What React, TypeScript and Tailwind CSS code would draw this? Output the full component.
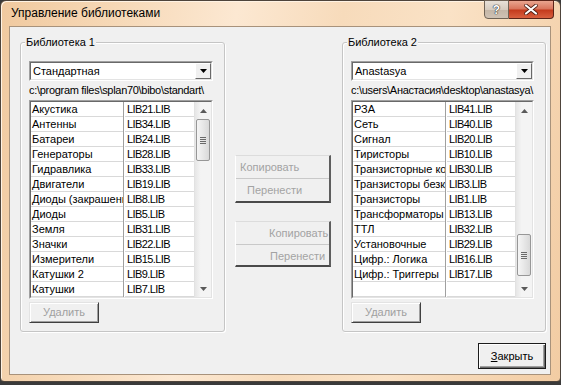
import React from "react"

const leftRows: [string, string][] = [
  ["Акустика", "LIB21.LIB"],
  ["Антенны", "LIB34.LIB"],
  ["Батареи", "LIB24.LIB"],
  ["Генераторы", "LIB28.LIB"],
  ["Гидравлика", "LIB33.LIB"],
  ["Двигатели", "LIB19.LIB"],
  ["Диоды (закрашенные)", "LIB8.LIB"],
  ["Диоды", "LIB5.LIB"],
  ["Земля", "LIB31.LIB"],
  ["Значки", "LIB22.LIB"],
  ["Измерители", "LIB15.LIB"],
  ["Катушки 2", "LIB9.LIB"],
  ["Катушки", "LIB7.LIB"],
]

const rightRows: [string, string][] = [
  ["РЗА", "LIB41.LIB"],
  ["Сеть", "LIB40.LIB"],
  ["Сигнал", "LIB20.LIB"],
  ["Тиристоры", "LIB10.LIB"],
  ["Транзисторные корпуса", "LIB30.LIB"],
  ["Транзисторы безкорпусные", "LIB3.LIB"],
  ["Транзисторы", "LIB1.LIB"],
  ["Трансформаторы", "LIB13.LIB"],
  ["ТТЛ", "LIB32.LIB"],
  ["Установочные", "LIB29.LIB"],
  ["Цифр.: Логика", "LIB16.LIB"],
  ["Цифр.: Триггеры", "LIB17.LIB"],
  ["", ""],
]

function Arrow({ up }: { up?: boolean }) {
  return (
    <div className="h-[17px] flex items-center justify-center">
      <svg width="7" height="4" viewBox="0 0 7 4">
        <path d={up ? "M0 4 L3.5 0 L7 4Z" : "M0 0 L7 0 L3.5 4Z"} fill="#5a5a5a" />
      </svg>
    </div>
  )
}

function Scrollbar({ thumbClass }: { thumbClass: string }) {
  return (
    <div className="w-[17px] flex flex-col border-l border-[#e2e2e2] bg-[linear-gradient(90deg,#e6e6e6,#f4f4f4_35%,#f4f4f4)]">
      <Arrow up />
      <div className="flex-1">
        <div
          className={
            "mx-[1px] h-[42px] rounded-[2px] border border-[#979797] bg-[linear-gradient(90deg,#f5f5f5,#e9e9e9_45%,#d9d9d9)] flex flex-col items-center justify-center gap-[1px] " +
            thumbClass
          }
        >
          <div className="w-[6px] h-px bg-[#6a6a6a]" />
          <div className="w-[6px] h-px bg-[#6a6a6a]" />
          <div className="w-[6px] h-px bg-[#6a6a6a]" />
          <div className="w-[6px] h-px bg-[#6a6a6a]" />
        </div>
      </div>
      <Arrow />
    </div>
  )
}

function Combo({ value }: { value: string }) {
  return (
    <div className="h-[20px] flex border border-t-[#a0a0a0] border-l-[#a0a0a0] border-r-white border-b-white">
      <div className="flex-1 flex bg-white border border-t-[#696969] border-l-[#696969] border-r-[#e3e3e3] border-b-[#e3e3e3]">
        <span className="flex-1 pl-[2px] leading-[16px] text-[11px] text-black">{value}</span>
        <div className="w-[16px] flex items-center justify-center bg-[#f0f0f0] border border-t-white border-l-white border-r-[#696969] border-b-[#696969]">
          <svg width="7" height="4" viewBox="0 0 7 4">
            <path d="M0 0 L7 0 L3.5 4Z" fill="#000" />
          </svg>
        </div>
      </div>
    </div>
  )
}

function List({ rows, thumbClass }: { rows: [string, string][]; thumbClass: string }) {
  return (
    <div className="h-[199px] flex border border-t-[#a0a0a0] border-l-[#a0a0a0] border-r-white border-b-white">
      <div className="flex-1 flex bg-white border border-t-[#696969] border-l-[#696969] border-r-[#e3e3e3] border-b-[#e3e3e3]">
        <div className="flex-1 flex flex-col">
          {rows.map(([name, file], i) => (
            <div key={i} className="h-[15px] flex text-[11px] leading-[14px] text-black">
              <div className="w-[92px] pl-[1px] overflow-hidden whitespace-nowrap border-b border-[#d9d9d9]">{name}</div>
              <div className="w-px bg-[#a0a0a0]" />
              <div className="flex-1 ml-[1px] pl-[2px] whitespace-nowrap tracking-[-0.6px] border-b border-[#d9d9d9]">{file}</div>
            </div>
          ))}
        </div>
        <Scrollbar thumbClass={thumbClass} />
      </div>
    </div>
  )
}

function Raised({ children, className }: { children: React.ReactNode; className: string }) {
  return (
    <div
      className={
        "h-[21px] flex items-center justify-center text-[11px] text-[#a0a0a0] bg-[#f0f0f0] border border-t-[#e3e3e3] border-l-[#e3e3e3] border-r-[#404040] border-b-[#404040] shadow-[inset_1px_1px_0_#fff,inset_-1px_-1px_0_#a0a0a0] " +
        className
      }
    >
      {children}
    </div>
  )
}

function Group({
  title,
  combo,
  path,
  rows,
  thumbClass,
}: {
  title: string
  combo: string
  path: string
  rows: [string, string][]
  thumbClass: string
}) {
  return (
    <div className="relative h-[290px] rounded-[3px] border border-[#c5c5c5] shadow-[inset_1px_1px_0_#fff,1px_1px_0_#fff] pt-[18px] pl-[8px] pr-[11px] flex flex-col">
      <span className="absolute -top-[7px] left-[4px] px-[1px] bg-[#f0f0f0] text-[11px] leading-[13px] text-black">{title}</span>
      <Combo value={combo} />
      <div className="mt-[3px] h-[13px] text-[11px] leading-[13px] tracking-[-0.3px] text-black whitespace-nowrap">{path}</div>
      <div className="mt-[3px]">
        <List rows={rows} thumbClass={thumbClass} />
      </div>
      <Raised className="mt-[3px] w-[70px]">Удалить</Raised>
    </div>
  )
}

function Pair({ className, padA, padB }: { className: string; padA: string; padB: string }) {
  return (
    <div
      className={
        "flex flex-col text-[11px] text-[#a3a3a3] bg-[#f0f0f0] border-t border-l border-r-2 border-b-2 border-t-[#dcdcdc] border-l-white border-r-[#5e5e5e] border-b-[#4a4a4a] " +
        className
      }
    >
      <div className={"h-[23px] leading-[22px] border-b border-[#c9c9c9] " + padA}>Копировать</div>
      <div className={"flex-1 leading-[22px] " + padB}>Перенести</div>
    </div>
  )
}

export default function App() {
  return (
    <div className="w-[561px] h-[385px] bg-[#3a3a3a] font-['Liberation_Sans',Arial,sans-serif]">
      <div className="h-[382px] flex flex-col rounded-t-[6px] rounded-b-[4px] border border-[#4e443b] shadow-[inset_1px_1px_0_#fff3e4] bg-[linear-gradient(100deg,#f0c99f_0%,#f6d8b6_18%,#fce8d2_38%,#f7dbbb_55%,#fae2c6_72%,#f2cca3_100%)]">
        <div className="h-[25px] flex items-start justify-between">
          <span className="pl-[10px] pt-[5px] text-[12px] leading-[15px] text-black">Управление библиотеками</span>
          <div className="flex -mt-px mr-[6px]">
            <div className="w-[25px] h-[19px] flex items-center justify-center rounded-bl-[4px] border border-[#6f6255] bg-[linear-gradient(180deg,#e8e0d8,#d6cbbf_50%,#c4b5a6_51%,#cfc2b4)]">
              <span className="text-[12px] font-bold leading-[12px] text-white [text-shadow:0_0_1px_#333,0_0_1px_#333,0_0_1px_#333]">?</span>
            </div>
            <div className="w-[45px] h-[19px] flex items-center justify-center rounded-br-[4px] border border-l-0 border-[#5b2419] bg-[linear-gradient(180deg,#eaa58f,#d8735a_48%,#c3391c_52%,#d9603f)]">
              <svg width="14" height="11" viewBox="0 0 14 11">
                <path d="M2 1.5 L12 9.5 M12 1.5 L2 9.5" stroke="#4a1a10" strokeWidth="3.6" strokeLinecap="round" />
                <path d="M2 1.5 L12 9.5 M12 1.5 L2 9.5" stroke="#fff" strokeWidth="2.2" strokeLinecap="round" />
              </svg>
            </div>
          </div>
        </div>
        <div className="flex-1 flex pl-[8px] pr-[9px] pb-[6px]">
          <div className="flex-1 flex flex-col bg-[#f0f0f0] border border-[#a8927b] pl-[10px] pr-[4px] pt-[15px] pb-[5px]">
            <div className="flex items-start">
              <div className="w-[205px]">
                <Group
                  title="Библиотека 1"
                  combo="Стандартная"
                  path="c:\program files\splan70\bibo\standart\"
                  rows={leftRows}
                  thumbClass="mt-0"
                />
              </div>
              <div className="w-[117px] pl-[10px] pr-[11px] pt-[113px] flex flex-col gap-[18px]">
                <Pair className="h-[48px]" padA="pl-[4px]" padB="pl-[11px]" />
                <Pair className="h-[46px]" padA="pl-[33px]" padB="pl-[34px]" />
              </div>
              <div className="w-[204px]">
                <Group
                  title="Библиотека 2"
                  combo="Anastasya"
                  path="c:\users\Анастасия\desktop\anastasya\"
                  rows={rightRows}
                  thumbClass="mt-[115px]"
                />
              </div>
            </div>
            <div className="mt-[11px] flex justify-end">
              <div className="w-[68px] h-[26px] flex items-center justify-center text-[11px] text-black bg-[#f0f0f0] border border-[#1c1c1c] shadow-[inset_1px_1px_0_#fff,inset_-1px_-1px_0_#696969,inset_-2px_-2px_0_#a0a0a0]">
                <span>
                  <span className="underline">З</span>акрыть
                </span>
              </div>
            </div>
          </div>
        </div>
      </div>
    </div>
  )
}
